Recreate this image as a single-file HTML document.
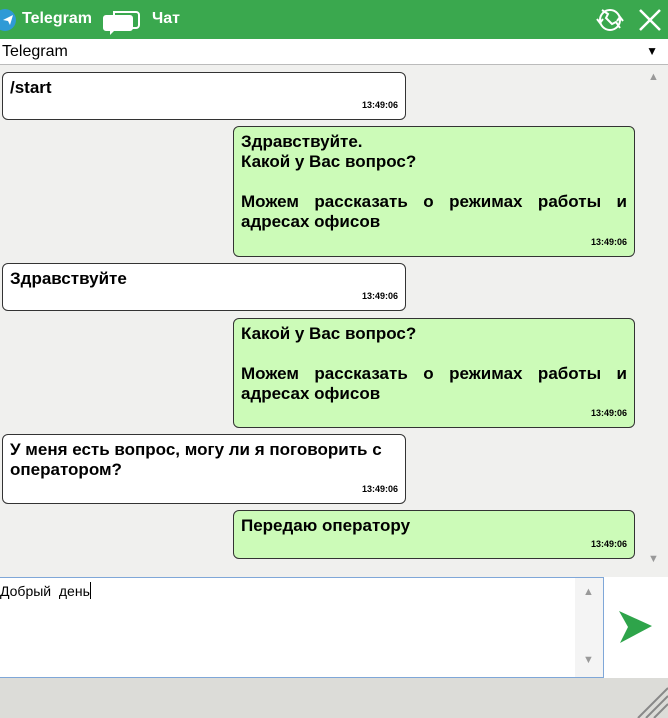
<!DOCTYPE html>
<html><head><meta charset="utf-8"><style>
*{margin:0;padding:0;box-sizing:border-box}
body{width:668px;height:718px;overflow:hidden;font-family:"Liberation Sans",Arial,sans-serif;background:#f0f0ee;position:relative}
.hdr{position:absolute;left:0;top:0;width:668px;height:39px;background:#3aa84e;color:#fff;font-weight:bold;font-size:16px}
.sel{position:absolute;left:0;top:39px;width:668px;height:26px;background:#fff;border-bottom:1px solid #bbb;font-size:16px;line-height:25px;padding-left:2px}
.chat{position:absolute;left:0;top:65px;width:640px;height:512px;background:#f0f0ee}
.sb{position:absolute;left:640px;top:65px;width:28px;height:512px;background:#f0f0ee}
.b{position:absolute;border:1px solid #333;border-radius:6px;font-weight:bold;font-size:17px;line-height:20px;padding:5px 7px 0 7px}
.l{left:2px;width:404px;background:#fff}
.r{left:233px;width:402px;background:#ccfbb8;text-align:justify}
.t{position:absolute;right:7px;bottom:4px;font-size:9px;font-weight:bold}
.inp{position:absolute;left:0;top:577px;width:604px;height:101px;background:#fff;border:1px solid #7fa7d8;border-left:none;font-size:14px;padding:4px 0 0 0}
.inp .isb{position:absolute;right:0;top:0;width:28px;height:99px;background:#f4f4f4}
.bot{position:absolute;left:0;top:678px;width:668px;height:40px;background:#dcdcd8}
.tri{position:absolute;font-size:11px;color:#999}
.nw{white-space:nowrap}
</style></head><body>
<div class="hdr">
<div style="position:absolute;left:-6px;top:9px;width:22px;height:22px;border-radius:50%;background:#2f9ad6"></div>
<svg style="position:absolute;left:2px;top:14px" width="12" height="12"><path d="M1 6 L11 1 L8 11 L6 7 Z" fill="#fff"/></svg>
<span style="position:absolute;left:22px;top:10px">Telegram</span>
<svg style="position:absolute;left:102px;top:8px" width="40" height="28"><path d="M12 4 h22 a3 3 0 0 1 3 3 v10 a3 3 0 0 1 -3 3 h-22z" fill="none" stroke="#fff" stroke-width="2"/><path d="M4 7 h24 a3 3 0 0 1 3 3 v10 a3 3 0 0 1 -3 3 h-16 l-4 4 v-4 h-4 a3 3 0 0 1 -3 -3 v-10 a3 3 0 0 1 3 -3z" fill="#fff"/></svg>
<span style="position:absolute;left:152px;top:10px">Чат</span>
<svg style="position:absolute;left:594px;top:5px" width="32" height="30"><circle cx="16" cy="15" r="10" fill="none" stroke="#fff" stroke-width="2"/><path d="M8 5 l6 4 -2 4 6 6 4-2 4 6" fill="none" stroke="#fff" stroke-width="2"/><path d="M3 14 l3 4 3-4 M29 16 l-3-4-3 4" fill="none" stroke="#fff" stroke-width="2"/></svg>
<svg style="position:absolute;left:638px;top:8px" width="24" height="24"><path d="M2 2 L22 22 M22 2 L2 22" stroke="#fff" stroke-width="2.5"/></svg>
</div>
<div class="sel">Telegram<span style="position:absolute;right:10px;font-size:12px">▼</span></div>
<div class="chat">
<div class="b l" style="top:7px;height:48px">/start<span class="t">13:49:06</span></div>
<div class="b r" style="top:61px;height:131px">Здравствуйте.<br>Какой у Вас вопрос?<br><br>Можем рассказать о режимах работы и <span class="nw">адресах офисов</span><span class="t">13:49:06</span></div>
<div class="b l" style="top:198px;height:48px">Здравствуйте<span class="t">13:49:06</span></div>
<div class="b r" style="top:253px;height:110px">Какой у Вас вопрос?<br><br>Можем рассказать о режимах работы и <span class="nw">адресах офисов</span><span class="t">13:49:06</span></div>
<div class="b l" style="top:369px;height:70px">У меня есть вопрос, могу ли я поговорить с оператором?<span class="t">13:49:06</span></div>
<div class="b r" style="top:445px;height:49px">Передаю оператору<span class="t">13:49:06</span></div>
</div>
<div class="sb"><span class="tri" style="left:8px;top:6px">▲</span><span class="tri" style="left:8px;top:488px">▼</span></div>
<div style="position:absolute;left:604px;top:577px;width:64px;height:101px;background:#fff"></div>
<div class="inp">Добрый&nbsp; день<span style="display:inline-block;width:1px;height:17px;background:#000;vertical-align:-3px"></span><div class="isb"><span class="tri" style="left:8px;top:8px">▲</span><span class="tri" style="left:8px;top:76px">▼</span></div></div>
<svg style="position:absolute;left:618px;top:610px" width="36" height="34"><path d="M1 1 L34 16 L2 33 L10 17 Z" fill="#2ea44a"/></svg>
<div class="bot"><svg style="position:absolute;left:636px;top:8px" width="32" height="32"><path d="M2 32 L32 2 M10 32 L32 10 M18 32 L32 18" stroke="#888" stroke-width="2"/></svg></div>
</body></html>
